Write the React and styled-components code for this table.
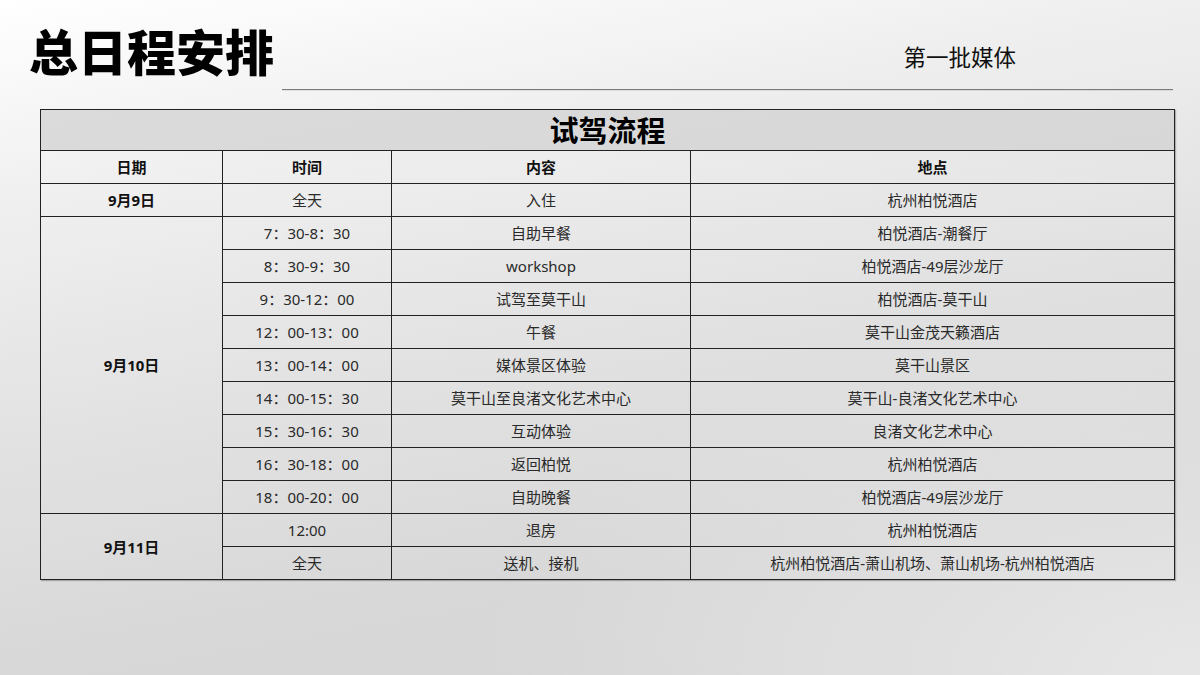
import React from "react";
import styled, { createGlobalStyle } from "styled-components";

const Global = createGlobalStyle`
  html, body { margin: 0; padding: 0; }
  body {
    width: 1200px;
    height: 675px;
    overflow: hidden;
    font-family: "Noto Sans", "Noto Sans CJK SC", sans-serif;
  }
`;

const Page = styled.div`
  width: 1200px;
  height: 675px;
  box-sizing: border-box;
  background:
    radial-gradient(ellipse 60% 55% at 100% 100%, rgba(232, 232, 232, 0.9), rgba(232, 232, 232, 0) 100%),
    linear-gradient(170deg, #ffffff 0%, #f0f0f0 22%, #e2e2e2 50%, #d7d7d7 78%, #d6d6d6 100%);
  display: flex;
  flex-direction: column;
`;

const Header = styled.header`
  height: 89px;
  display: flex;
  align-items: flex-start;
`;

const Title = styled.h1`
  margin: 25px 0 0 29px;
  font-family: "Noto Sans CJK SC", sans-serif;
  font-size: 49px;
  line-height: 49px;
  font-weight: 900;
  color: #000;
`;

const Subtitle = styled.div`
  margin: 45px 184px 0 auto;
  font-family: "Noto Sans CJK SC", sans-serif;
  font-size: 22.5px;
  line-height: 22px;
  color: #111;
  font-weight: 400;
`;

const Rule = styled.div`
  margin-left: 282px;
  width: 891px;
  height: 1px;
  background: #7a7a7a;
  box-shadow: 0 1px 0 rgba(0, 0, 0, 0.08);
`;

const Table = styled.table`
  margin: 19px 0 0 40px;
  width: 1134px;
  table-layout: fixed;
  border-collapse: collapse;
  border: 1px solid #3a3a3a;
  box-shadow: 1px 1px 1px rgba(0, 0, 0, 0.25);
`;

const TitleCell = styled.th`
  height: 38px;
  padding: 0 0 2px;
  background: rgba(210, 210, 210, 0.75);
  border: 1px solid #222;
  font-family: "Noto Sans CJK SC", sans-serif;
  font-size: 29px;
  font-weight: 700;
  color: #000;
  line-height: 38px;
  text-align: center;
`;

const HeadCell = styled.th`
  height: 31px;
  padding: 0 0 1px;
  border: 1px solid #222;
  font-family: "Noto Sans CJK SC", sans-serif;
  font-size: 15px;
  font-weight: 700;
  color: #111;
  text-align: center;
`;

const Cell = styled.td`
  height: 31px;
  padding: 0 0 1px;
  border: 1px solid #222;
  font-size: 15px;
  font-weight: ${(p) => (p.$bold ? 700 : 400)};
  color: ${(p) => (p.$bold ? "#111" : "#2a2a2a")};
  text-align: center;
  vertical-align: middle;
  white-space: nowrap;
`;

const days = [
  {
    date: "9月9日",
    rows: [["全天", "入住", "杭州柏悦酒店"]],
  },
  {
    date: "9月10日",
    rows: [
      ["7：30-8：30", "自助早餐", "柏悦酒店-潮餐厅"],
      ["8：30-9：30", "workshop", "柏悦酒店-49层沙龙厅"],
      ["9：30-12：00", "试驾至莫干山", "柏悦酒店-莫干山"],
      ["12：00-13：00", "午餐", "莫干山金茂天籁酒店"],
      ["13：00-14：00", "媒体景区体验", "莫干山景区"],
      ["14：00-15：30", "莫干山至良渚文化艺术中心", "莫干山-良渚文化艺术中心"],
      ["15：30-16：30", "互动体验", "良渚文化艺术中心"],
      ["16：30-18：00", "返回柏悦", "杭州柏悦酒店"],
      ["18：00-20：00", "自助晚餐", "柏悦酒店-49层沙龙厅"],
    ],
  },
  {
    date: "9月11日",
    rows: [
      ["12:00", "退房", "杭州柏悦酒店"],
      ["全天", "送机、接机", "杭州柏悦酒店-萧山机场、萧山机场-杭州柏悦酒店"],
    ],
  },
];

export default function App() {
  return (
    <Page>
      <Global />
      <Header>
        <Title>总日程安排</Title>
        <Subtitle>第一批媒体</Subtitle>
      </Header>
      <Rule />
      <Table>
        <colgroup>
          <col style={{ width: "182px" }} />
          <col style={{ width: "169px" }} />
          <col style={{ width: "299px" }} />
          <col style={{ width: "484px" }} />
        </colgroup>
        <thead>
          <tr>
            <TitleCell colSpan={4}>试驾流程</TitleCell>
          </tr>
          <tr>
            <HeadCell>日期</HeadCell>
            <HeadCell>时间</HeadCell>
            <HeadCell>内容</HeadCell>
            <HeadCell>地点</HeadCell>
          </tr>
        </thead>
        <tbody>
          {days.map((d) =>
            d.rows.map((r, i) => (
              <tr key={d.date + i}>
                {i === 0 && (
                  <Cell $bold rowSpan={d.rows.length}>
                    {d.date}
                  </Cell>
                )}
                {r.map((c, j) => (
                  <Cell key={j}>{c}</Cell>
                ))}
              </tr>
            ))
          )}
        </tbody>
      </Table>
    </Page>
  );
}
